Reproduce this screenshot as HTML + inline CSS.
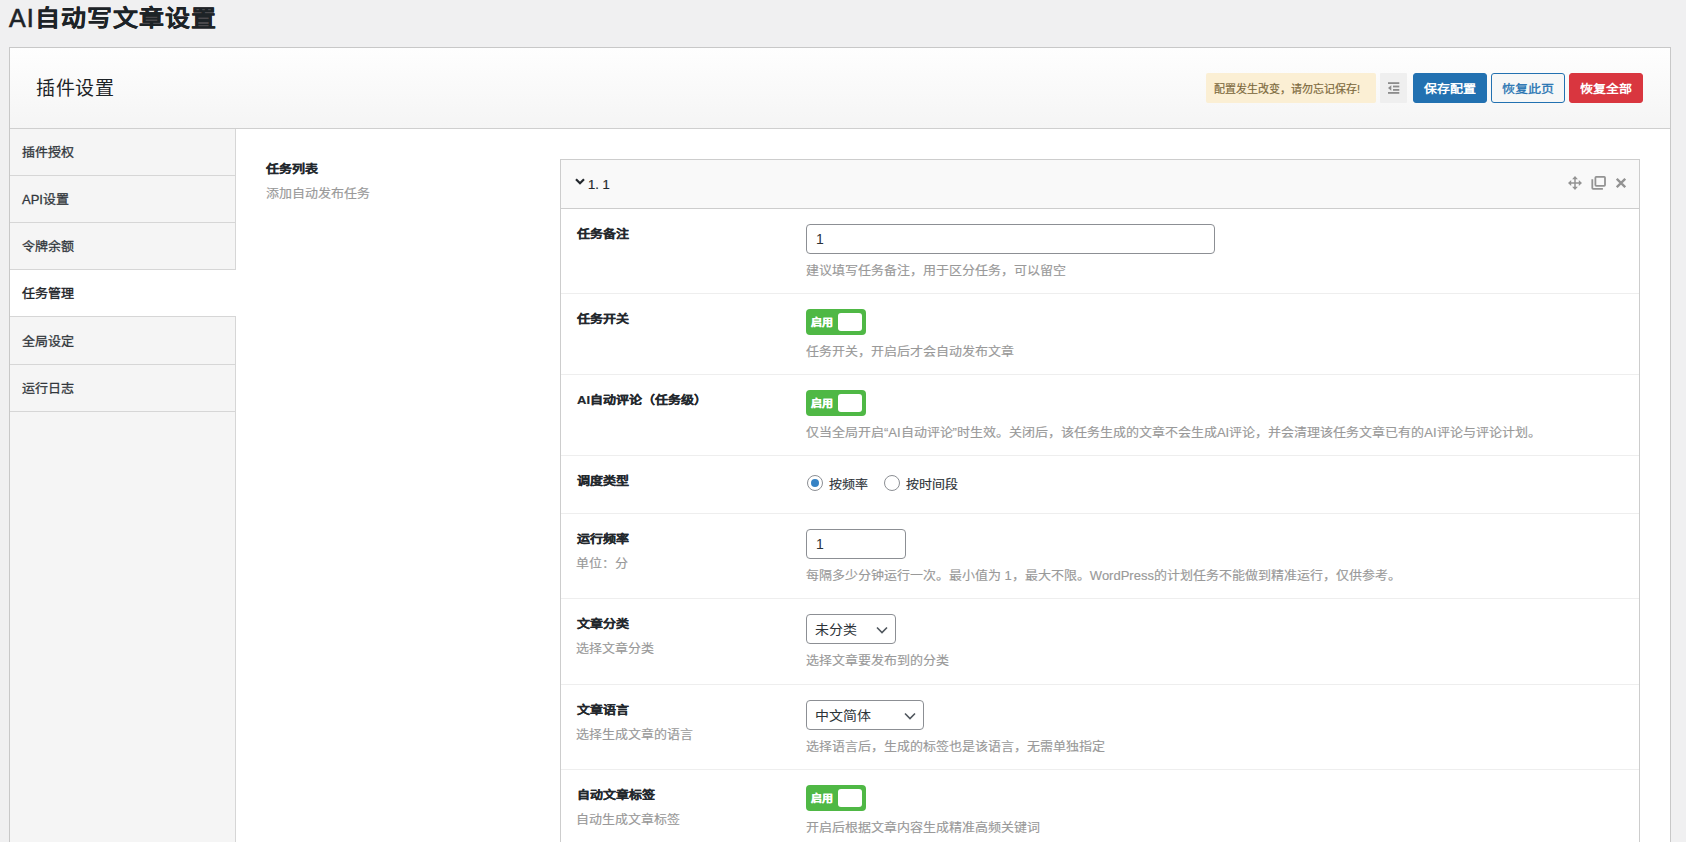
<!DOCTYPE html>
<html lang="zh-CN"><head><meta charset="utf-8">
<style>
*{box-sizing:border-box;margin:0;padding:0}
html,body{width:1686px;height:842px;overflow:hidden}
body{background:#f0f0f1;font-family:"Liberation Sans",sans-serif;color:#3c434a;position:relative}
.a{position:absolute;white-space:nowrap}
h1{position:absolute;left:9px;top:-2px;font-size:25px;line-height:40px;font-weight:400;color:#1d2327;white-space:nowrap}
h1 b{font-weight:400;letter-spacing:1px;margin-right:0;-webkit-text-stroke:0.6px #1d2327}
h1 span{display:inline-block;letter-spacing:1.1px;font-weight:700;-webkit-text-stroke:0.2px #1d2327;transform:scaleY(.91);transform-origin:0 45%}
.panel{position:absolute;left:9px;top:47px;width:1662px;height:820px;border:1px solid #c8c8c8;background:#fff}
.hdr{position:absolute;left:0;top:0;width:1660px;height:81px;background:linear-gradient(#fefefe,#f5f5f5);border-bottom:1px solid #cfcfcf}
.nav{position:absolute;left:0;top:81px;width:226px;height:760px;background:#f5f5f5;border-right:1px solid #d6d6d6}
.nav div{position:absolute;left:0;width:225px;height:47px;border-bottom:1px solid #d6d6d6;font-size:13px;line-height:48px;padding-left:12px;color:#32373c;-webkit-text-stroke:0.3px #32373c}
.nav div.act{background:#fff;color:#1d2327;width:226px;-webkit-text-stroke:0.4px #1d2327}
.nav span{display:inline-block;transform:scaleY(.92);transform-origin:0 52%}
.btn{position:absolute;top:25px;height:30px;border-radius:3px;font-size:13px;line-height:29px;text-align:center;font-weight:700}
.btn span{display:inline-block;transform:scaleY(.9);transform-origin:50% 55%}
.rep{position:absolute;left:550px;top:111px;width:1080px;height:760px;border:1px solid #cdcdcd;background:#fff}
.rh{position:absolute;left:0;top:0;width:1078px;height:49px;background:#f9f9f9;border-bottom:1px solid #cdcdcd}
.row{position:absolute;left:0;width:1078px;border-bottom:1px solid #eee}
.lbl{position:absolute;left:16px;font-size:13px;line-height:20px;font-weight:700;color:#23282d;-webkit-text-stroke:0.2px #23282d;transform:scaleY(.9);transform-origin:50% 55%}
.sub{position:absolute;left:15px;font-size:13px;line-height:20px;color:#999;-webkit-text-stroke:0.15px #999;transform:scaleY(.92);transform-origin:0 52%}
.desc{position:absolute;left:245px;font-size:13px;line-height:20px;color:#999;white-space:nowrap;-webkit-text-stroke:0.15px #999;transform:scaleY(.92);transform-origin:0 52%}
.inp{position:absolute;left:245px;height:30px;border:1px solid #8c8f94;border-radius:4px;background:#fff;font-size:14px;line-height:28px;padding-left:9px;color:#2c3338}
.sw{position:absolute;left:245px;width:60px;height:26px;border-radius:4px;background:#4fb845}
.sw .on{position:absolute;left:5px;top:0;font-size:11px;line-height:26px;font-weight:700;color:#fff;-webkit-text-stroke:0.3px #fff}
.sw .on i{font-style:normal;display:inline-block;transform:scaleY(.92);transform-origin:0 55%}
.sw .ball{position:absolute;left:32px;top:4px;width:24px;height:18px;background:#fff;border-radius:3px}
.sel{position:absolute;left:245px;height:30px;border:1px solid #8c8f94;border-radius:4px;background:#fff;font-size:14px;line-height:28px;padding-left:8px;color:#2c3338}
.sel svg{position:absolute;top:10.5px}
.sel span{display:inline-block;transform:scaleY(.9);transform-origin:0 55%}
.radio{position:absolute;width:16px;height:16px;border:1px solid #8c8f94;border-radius:50%;background:#fff}
.radio i{position:absolute;left:3px;top:3px;width:8px;height:8px;border-radius:50%;background:#3582c4}
</style></head><body>
<h1><b>AI</b><span>自动写文章设置</span></h1>
<div class="panel">
  <div class="hdr">
    <div class="a" style="left:26px;top:26px;font-size:19px;letter-spacing:.6px;line-height:30px;color:#1d2327">插件设置</div>
    <div class="a" style="left:1196px;top:25px;width:170px;height:30px;background:#fbefd4;border-radius:2px;font-size:11px;line-height:32px;color:#7d6a3e;padding-left:8px;-webkit-text-stroke:0.2px #7d6a3e">配置发生改变，请勿忘记保存!</div>
    <div class="a" style="left:1370px;top:25px;width:27px;height:30px;background:#efefef;border-radius:1px"><svg class="a" style="left:8px;top:9px" width="12" height="12" viewBox="0 0 12 12" fill="#8c8c8c"><rect x="0" y="0.2" width="11.3" height="1.8"/><rect x="5" y="3.6" width="6.3" height="1.8"/><rect x="5" y="7" width="6.3" height="1.8"/><rect x="0" y="10" width="11.3" height="1.8"/><path d="M0 6 L3.3 3.2 V8.8 Z"/></svg></div>
    <div class="btn" style="left:1403px;width:74px;background:#2271b1;color:#fff;border:1px solid #2271b1"><span>保存配置</span></div>
    <div class="btn" style="left:1481px;width:74px;background:#f6f7f7;color:#2271b1;border:1px solid #2271b1;font-weight:400;-webkit-text-stroke:0.3px #2271b1"><span>恢复此页</span></div>
    <div class="btn" style="left:1559px;width:74px;background:#d9363f;color:#fff;border:1px solid #d9363f"><span>恢复全部</span></div>
  </div>
  <div class="nav">
    <div style="top:0"><span>插件授权</span></div>
    <div style="top:47px"><span>API设置</span></div>
    <div style="top:94px"><span>令牌余额</span></div>
    <div class="act" style="top:141px"><span>任务管理</span></div>
    <div style="top:189px"><span>全局设定</span></div>
    <div style="top:236px"><span>运行日志</span></div>
  </div>
  <div class="a" style="left:256px;top:111px;font-size:13px;line-height:20px;font-weight:700;color:#23282d;-webkit-text-stroke:0.2px #23282d;transform:scaleY(.9);transform-origin:0 55%">任务列表</div>
  <div class="a" style="left:256px;top:136px;font-size:13px;line-height:20px;color:#999;-webkit-text-stroke:0.15px #999;transform:scaleY(.92);transform-origin:0 52%">添加自动发布任务</div>
  <div class="rep">

    <div class="rh">
      <svg class="a" style="left:14px;top:18px" width="10" height="7" viewBox="0 0 10 7"><path d="M1 1.2 L5 5.2 L9 1.2" fill="none" stroke="#23282d" stroke-width="2.2"/></svg>
      <div class="a" style="left:27px;top:15px;font-size:13px;line-height:20px;color:#23282d;-webkit-text-stroke:0.2px #23282d">1. 1</div>
      <svg class="a" style="left:1007px;top:16px" width="14" height="14" viewBox="0 0 14 14" fill="#939393"><path d="M2 7 H12 M7 2 V12" stroke="#939393" stroke-width="1.5"/><path d="M0 7 L3.2 4.1 V9.9Z M14 7 L10.8 4.1 V9.9Z M7 0 L4.1 3.2 H9.9Z M7 14 L4.1 10.8 H9.9Z"/></svg>
      <svg class="a" style="left:1030px;top:16px" width="15" height="14" viewBox="0 0 15 14" fill="none" stroke="#939393" stroke-width="1.8"><rect x="4.4" y="0.9" width="9.6" height="9" rx="0.8"/><path d="M1.3 3.2 V12 Q1.3 12.8 2.1 12.8 H11.9"/></svg>
      <svg class="a" style="left:1055px;top:18px" width="10" height="10" viewBox="0 0 10 10" stroke="#939393" stroke-width="2.3"><path d="M0.8 0.8 L9.2 9.2 M9.2 0.8 L0.8 9.2"/></svg>

    </div>
    <div class="row" style="top:49px;height:85px">
      <div class="lbl" style="top:15px">任务备注</div>
      <div class="inp" style="top:15px;width:409px">1</div>
      <div class="desc" style="top:52px">建议填写任务备注，用于区分任务，可以留空</div>
    </div>
    <div class="row" style="top:134px;height:81px">
      <div class="lbl" style="top:15px">任务开关</div>
      <div class="sw" style="top:15px"><span class="on"><i>启用</i></span><span class="ball"></span></div>
      <div class="desc" style="top:48px">任务开关，开启后才会自动发布文章</div>
    </div>
    <div class="row" style="top:215px;height:81px">
      <div class="lbl" style="top:15px">AI自动评论（任务级）</div>
      <div class="sw" style="top:15px"><span class="on"><i>启用</i></span><span class="ball"></span></div>
      <div class="desc" style="top:48px">仅当全局开启“AI自动评论”时生效。关闭后，该任务生成的文章不会生成AI评论，并会清理该任务文章已有的AI评论与评论计划。</div>
    </div>
    <div class="row" style="top:296px;height:58px">
      <div class="lbl" style="top:15px">调度类型</div>
      <div class="radio" style="left:246px;top:19px"><i></i></div>
      <div class="desc" style="left:268px;top:19px;color:#2c3338;-webkit-text-stroke:0.15px #2c3338;transform:scaleY(.92)">按频率</div>
      <div class="radio" style="left:323px;top:19px"></div>
      <div class="desc" style="left:345px;top:19px;color:#2c3338;-webkit-text-stroke:0.15px #2c3338;transform:scaleY(.92)">按时间段</div>
    </div>
    <div class="row" style="top:354px;height:85px">
      <div class="lbl" style="top:15px">运行频率</div>
      <div class="sub" style="top:40px">单位：分</div>
      <div class="inp" style="top:15px;width:100px">1</div>
      <div class="desc" style="top:52px">每隔多少分钟运行一次。最小值为 1，最大不限。WordPress的计划任务不能做到精准运行，仅供参考。</div>
    </div>
    <div class="row" style="top:439px;height:86px">
      <div class="lbl" style="top:15px">文章分类</div>
      <div class="sub" style="top:40px">选择文章分类</div>
      <div class="sel" style="top:15px;width:90px"><span>未分类</span><svg style="left:69px" width="12" height="8" viewBox="0 0 12 8"><path d="M1 1.5 L6 6.5 L11 1.5" fill="none" stroke="#50575e" stroke-width="1.6"/></svg></div>
      <div class="desc" style="top:52px">选择文章要发布到的分类</div>
    </div>
    <div class="row" style="top:525px;height:85px">
      <div class="lbl" style="top:15px">文章语言</div>
      <div class="sub" style="top:40px">选择生成文章的语言</div>
      <div class="sel" style="top:15px;width:118px"><span>中文简体</span><svg style="left:97px" width="12" height="8" viewBox="0 0 12 8"><path d="M1 1.5 L6 6.5 L11 1.5" fill="none" stroke="#50575e" stroke-width="1.6"/></svg></div>
      <div class="desc" style="top:52px">选择语言后，生成的标签也是该语言，无需单独指定</div>
    </div>
    <div class="row" style="top:610px;height:200px;border-bottom:none">
      <div class="lbl" style="top:15px">自动文章标签</div>
      <div class="sub" style="top:40px">自动生成文章标签</div>
      <div class="sw" style="top:15px"><span class="on"><i>启用</i></span><span class="ball"></span></div>
      <div class="desc" style="top:48px">开启后根据文章内容生成精准高频关键词</div>
    </div>
  </div>
</div>
</body></html>
